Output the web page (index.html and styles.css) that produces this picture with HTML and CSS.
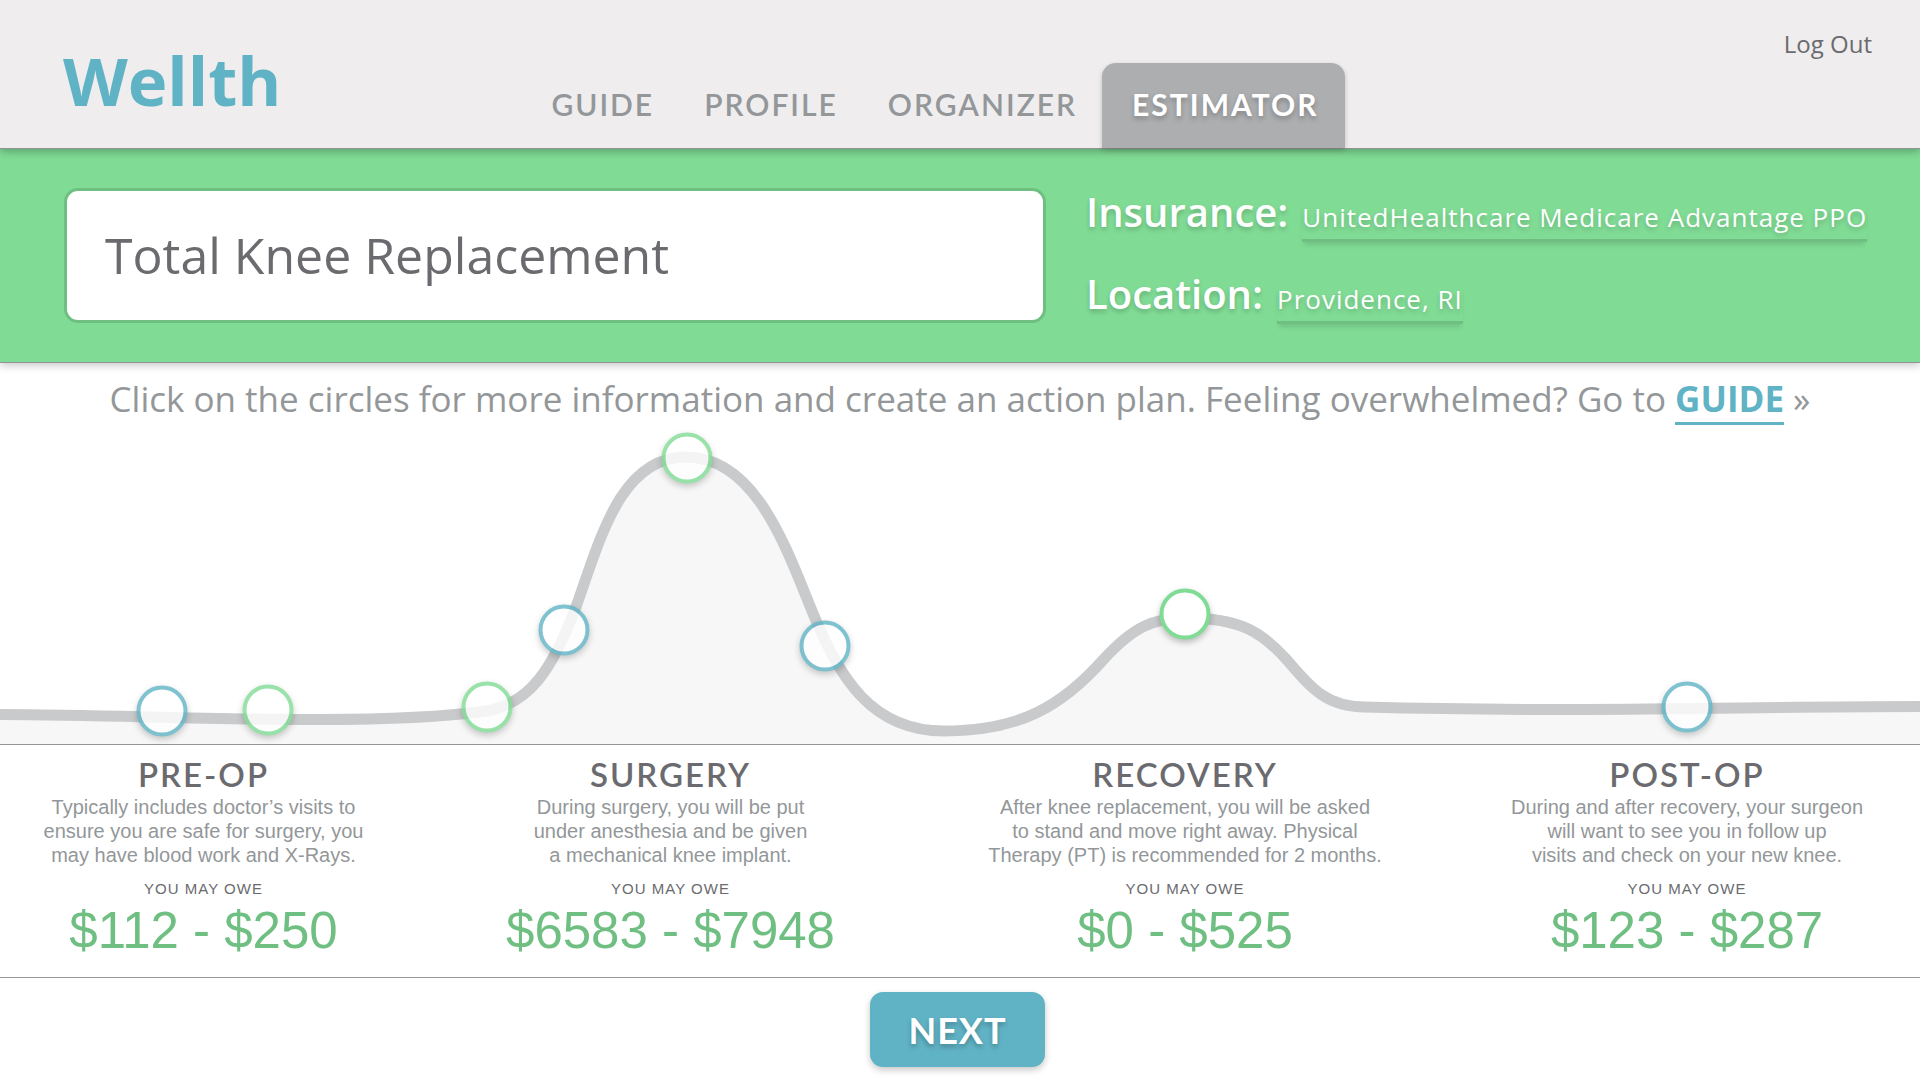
FILE: index.html
```html
<!DOCTYPE html>
<html lang="en">
<head>
<meta charset="utf-8">
<meta name="viewport" content="width=device-width, initial-scale=1">
<title>Wellth – Estimator</title>
<link rel="stylesheet" href="styles.css">
</head>
<body>
<header class="header">
  <a class="logo" href="#">Wellth</a>
  <nav class="nav" aria-label="Main">
    <a class="nav-link" href="#">GUIDE</a>
    <a class="nav-link" href="#">PROFILE</a>
    <a class="nav-link" href="#">ORGANIZER</a>
    <a class="nav-link active" href="#" aria-current="page">ESTIMATOR</a>
  </nav>
  <a class="logout" href="#">Log Out</a>
</header>

<section class="search">
  <input class="procedure" type="text" value="Total Knee Replacement" aria-label="Procedure">
  <dl class="details">
    <div class="detail">
      <dt>Insurance:</dt>
      <dd><a href="#">UnitedHealthcare Medicare Advantage PPO</a></dd>
    </div>
    <div class="detail">
      <dt>Location:</dt>
      <dd><a href="#">Providence, RI</a></dd>
    </div>
  </dl>
</section>

<main>
  <p class="info">Click on the circles for more information and create an action plan. Feeling overwhelmed? Go to <a class="guide-link" href="#">GUIDE</a> »</p>

  <div class="chart">
    <svg class="curve" viewBox="0 0 1920 320" aria-hidden="true">
      <path class="curve-area" d="M-6 290.500C100 290.500 200 295.500 320 295.500C400 295.500 450 292 486 287C530 280 553 244 576 183C600 116 620 33 686 33C760 33 790 136 817 199C840 251 870 307 944 307C1020 307 1062 282 1103 236C1133 203 1153 194 1186 194C1240 194 1262 208 1287 236C1310 263 1326 283 1365 283C1440 285 1500 285.500 1570 285.500C1720 285 1780 282.500 1926 282.500V330H-6Z"/>
      <path class="curve-line" d="M-6 290.500C100 290.500 200 295.500 320 295.500C400 295.500 450 292 486 287C530 280 553 244 576 183C600 116 620 33 686 33C760 33 790 136 817 199C840 251 870 307 944 307C1020 307 1062 282 1103 236C1133 203 1153 194 1186 194C1240 194 1262 208 1287 236C1310 263 1326 283 1365 283C1440 285 1500 285.500 1570 285.500C1720 285 1780 282.500 1926 282.500"/>
    </svg>
    <button class="marker blue" style="left:8.46%;top:89.8%" aria-label="Pre-op visit"></button>
    <button class="marker green" style="left:13.98%;top:89.5%" aria-label="Pre-op tests"></button>
    <button class="marker green" style="left:25.34%;top:88.3%" aria-label="Surgery preparation"></button>
    <button class="marker blue" style="left:29.4%;top:64.5%" aria-label="Anesthesia"></button>
    <button class="marker green" style="left:35.76%;top:10.5%" aria-label="Surgery"></button>
    <button class="marker blue" style="left:42.97%;top:69.5%" aria-label="Hospital stay"></button>
    <button class="marker green solid" style="left:61.74%;top:59.5%" aria-label="Recovery"></button>
    <button class="marker blue" style="left:87.84%;top:88.3%" aria-label="Post-op visit"></button>
  </div>

  <div class="stages">
    <section class="stage">
      <h2>PRE-OP</h2>
      <p class="text">Typically includes doctor’s visits to<br>ensure you are safe for surgery, you<br>may have blood work and X-Rays.</p>
      <p class="owe">YOU MAY OWE</p>
      <p class="price">$112 - $250</p>
    </section>
    <section class="stage">
      <h2>SURGERY</h2>
      <p class="text">During surgery, you will be put<br>under anesthesia and be given<br>a mechanical knee implant.</p>
      <p class="owe">YOU MAY OWE</p>
      <p class="price">$6583 - $7948</p>
    </section>
    <section class="stage">
      <h2>RECOVERY</h2>
      <p class="text">After knee replacement, you will be asked<br>to stand and move right away. Physical<br>Therapy (PT) is recommended for 2 months.</p>
      <p class="owe">YOU MAY OWE</p>
      <p class="price">$0 - $525</p>
    </section>
    <section class="stage">
      <h2>POST-OP</h2>
      <p class="text">During and after recovery, your surgeon<br>will want to see you in follow up<br>visits and check on your new knee.</p>
      <p class="owe">YOU MAY OWE</p>
      <p class="price">$123 - $287</p>
    </section>
  </div>
</main>

<footer class="footer">
  <button class="next" type="button">NEXT</button>
</footer>
</body>
</html>
```
FILE: styles.css
```css
* {
  box-sizing: border-box;
}

body {
  margin: 0;
  background: #fff;
  color: #6b6b6f;
  font-family: "Open Sans", sans-serif;
}

h2, p, dl, dd {
  margin: 0;
}

a {
  color: inherit;
  text-decoration: none;
}

/* Header */

.header {
  position: relative;
  z-index: 2;
  display: grid;
  grid-template-columns: 526fr auto 575fr;
  height: 149px;
  background: #efedee;
  border-bottom: 1px solid #8e9396;
  box-shadow: 0 3px 8px rgba(0, 0, 0, 0.25);
}

.logo {
  padding: 34px 0 0 63px;
  color: #60b3c5;
  font-size: 67px;
  font-weight: 700;
  line-height: 92px;
}

.nav {
  display: flex;
  align-items: flex-end;
}

.nav-link {
  height: 85px;
  padding: 0 25px;
  border-radius: 14px 14px 0 0;
  color: #939799;
  font-family: "Lato", sans-serif;
  font-size: 30px;
  font-weight: 600;
  line-height: 82px;
  letter-spacing: 2px;
}

.nav-link.active {
  padding: 0 26px 0 30px;
  background: #adaeb0;
  box-shadow: 0 2px 5px rgba(0, 0, 0, 0.2);
  color: #fff;
  font-weight: 700;
  text-shadow: 0 3px 5px rgba(0, 0, 0, 0.25);
}

.logout {
  justify-self: end;
  padding: 28px 48px 0 0;
  font-size: 24px;
  line-height: 32px;
}

/* Search band */

.search {
  position: relative;
  z-index: 1;
  display: grid;
  grid-template-columns: 982fr 834fr;
  gap: 40px;
  padding: 39px 0 38px 64px;
  background: #80dc95;
  border-bottom: 1px solid #8e9396;
  box-shadow: 0 3px 8px rgba(0, 0, 0, 0.2);
}

.procedure {
  width: 100%;
  min-width: 0;
  height: 135px;
  padding: 0 38px 2px;
  border: 3px solid #6fbf82;
  border-radius: 14px;
  background: #fff;
  color: #6b6b6f;
  font: 400 50px "Open Sans", sans-serif;
}

.details {
  display: grid;
  align-content: start;
  gap: 28px;
  color: #fff;
  text-shadow: 0 3px 5px rgba(0, 0, 0, 0.2);
}

.detail {
  display: flex;
  align-items: baseline;
  gap: 14px;
  white-space: nowrap;
}

.detail dt {
  font-size: 40px;
  font-weight: 600;
  line-height: 48px;
}

.detail a {
  display: block;
  padding-bottom: 5px;
  border-bottom: 3px solid #6fbf82;
  box-shadow: 0 5px 5px -2px rgba(0, 0, 0, 0.12);
  font-size: 26px;
  line-height: 34px;
  letter-spacing: 1px;
}

/* Cost curve */

.info {
  padding: 10px 20px 0;
  color: #939799;
  font-size: 35px;
  line-height: 51px;
  text-align: center;
}

.guide-link {
  border-bottom: 3px solid #60b3c5;
  color: #60b3c5;
  font-weight: 700;
}

.chart {
  position: relative;
  aspect-ratio: 6 / 1;
}

.curve {
  display: block;
  width: 100%;
  height: 100%;
}

.curve-area {
  fill: #f7f7f7;
}

.curve-line {
  fill: none;
  stroke: #c9cacc;
  stroke-width: 11;
}

.marker {
  position: absolute;
  width: 51px;
  height: 51px;
  padding: 0;
  transform: translate(-50%, -50%);
  border: 4px solid;
  border-radius: 50%;
  background: #fff;
  box-shadow: 0 3px 6px rgba(0, 0, 0, 0.25);
  opacity: 0.8;
  cursor: pointer;
}

.marker.blue {
  border-color: #60b3c5;
}

.marker.green {
  border-color: #80dc95;
}

.marker.solid {
  opacity: 1;
}

/* Stages */

.stages {
  display: grid;
  grid-template-columns: 407fr 527fr 502fr 484fr;
  height: 234px;
  padding-top: 10px;
  border-top: 1px solid #939799;
  border-bottom: 1px solid #939799;
  text-align: center;
}

.stage:last-child {
  padding-left: 18px;
}

.stage h2 {
  padding-bottom: 1px;
  font-family: "Lato", sans-serif;
  font-size: 33px;
  font-weight: 600;
  line-height: 39px;
  letter-spacing: 2px;
}

.text {
  color: #939799;
  font-family: "Liberation Sans", sans-serif;
  font-size: 20px;
  line-height: 24px;
}

.owe {
  padding-top: 11px;
  font-family: "Liberation Sans", sans-serif;
  font-size: 15px;
  line-height: 22px;
  letter-spacing: 1px;
}

.price {
  color: #6fbf82;
  font-family: "Liberation Sans", sans-serif;
  font-size: 51px;
  line-height: 62px;
}

.footer {
  display: flex;
  justify-content: center;
  padding: 14px 5px 12px 0;
}

.next {
  width: 175px;
  height: 75px;
  padding: 0;
  border: 0;
  border-radius: 13px;
  background: #60b3c5;
  box-shadow: 0 3px 7px rgba(0, 0, 0, 0.22);
  color: #fff;
  font: 700 36px "Lato", sans-serif;
  letter-spacing: 1px;
  text-shadow: 0 3px 5px rgba(0, 0, 0, 0.25);
  cursor: pointer;
}
```
